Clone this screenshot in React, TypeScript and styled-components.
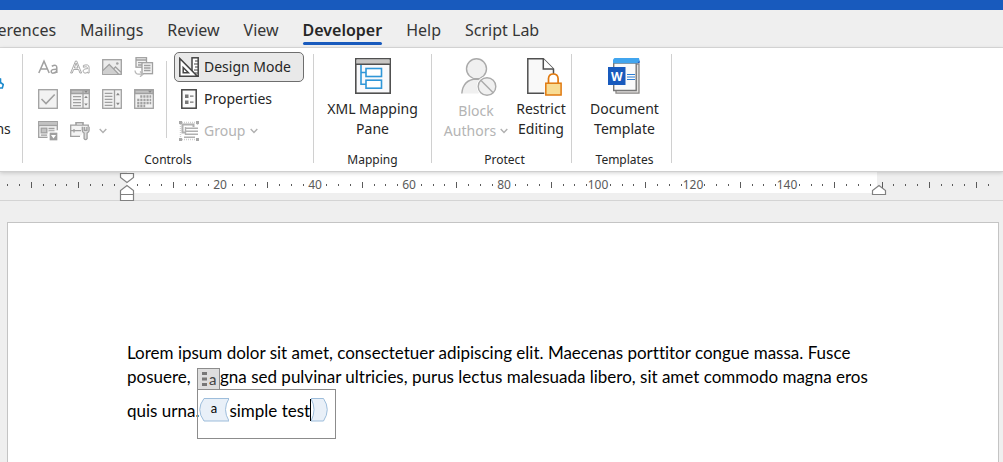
import React from "react";
import styled, { createGlobalStyle } from "styled-components";

const GlobalStyle = createGlobalStyle`
  * { box-sizing: border-box; }
  html, body, #root { height: 100%; }
  body {
    margin: 0;
    background: #efefef;
    font-family: "Noto Sans", "Open Sans", sans-serif;
    color: #262626;
  }
  button, a { font: inherit; color: inherit; }
  svg { display: block; flex: none; }
`;

const Window = styled.div`
  display: flex;
  flex-direction: column;
  min-height: 100%;
  overflow: hidden;
`;

const TitleBar = styled.div`
  height: 10px;
  background: #185abd;
`;

const Tabs = styled.nav`
  display: flex;
  height: 38px;
  margin-left: -39px;
  border-bottom: 1px solid #dcdcdc;
`;

const Tab = styled.a<{ $active?: boolean }>`
  display: flex;
  flex-direction: column;
  align-items: stretch;
  padding: 8px 12px 0;
  font-size: 16px;
  line-height: 24px;
  font-weight: ${(p) => (p.$active ? 600 : 400)};
  white-space: nowrap;
  text-decoration: none;
  color: ${(p) => (p.$active ? "#262626" : "#363636")};
  &::after {
    content: "";
    height: 3px;
    border-radius: 2px;
    background: ${(p) => (p.$active ? "#185abd" : "transparent")};
  }
`;

const Ribbon = styled.div`
  display: flex;
  height: 124px;
  background: #fff;
  border-bottom: 1px solid #cfcfcf;
  box-shadow: 0 1px 4px rgba(0, 0, 0, 0.18);
  position: relative;
`;

const Group = styled.section<{ $width: number; $indent?: boolean }>`
  display: flex;
  flex-direction: column;
  flex: none;
  width: ${(p) => p.$width}px;
  padding-top: 3px;
  padding-left: ${(p) => (p.$indent ? 6 : 0)}px;
`;

const GroupBody = styled.div<{ $align?: string }>`
  display: flex;
  flex: none;
  justify-content: ${(p) => p.$align || "center"};
  height: 96px;
`;

const Caption = styled.div`
  flex: none;
  padding-top: 1px;
  font-size: 12px;
  line-height: 24px;
  text-align: center;
`;

const Divider = styled.div<{ $inner?: boolean }>`
  flex: none;
  width: 1px;
  margin: ${(p) => (p.$inner ? "10px 7px 9px 6px" : "6px 0 8px")};
  background: #d0d0d0;
`;

const ControlGrid = styled.div`
  display: grid;
  grid-template-columns: repeat(4, 32px);
  grid-auto-rows: 32px;
  padding-left: 9px;
`;

const IconButton = styled.button`
  display: flex;
  align-items: center;
  justify-content: center;
  gap: 8px;
  padding: 0;
  border: 0;
  background: none;
  color: #a0a0a0;
`;

const SplitIconButton = styled(IconButton)`
  grid-column: span 2;
  justify-content: flex-start;
  padding-left: 6px;
`;

const Stack = styled.div`
  display: flex;
  flex-direction: column;
  justify-content: space-between;
  width: 130px;
  padding: 1px 0;
`;

const RowButton = styled.button<{ $pressed?: boolean }>`
  display: flex;
  align-items: center;
  gap: 5px;
  height: 30px;
  padding: 0 4px;
  border: 1px solid ${(p) => (p.$pressed ? "#6e6e6e" : "transparent")};
  border-radius: 5px;
  background: ${(p) => (p.$pressed ? "#e9e9e9" : "transparent")};
  font-size: 14px;
  line-height: 20px;
  white-space: nowrap;
  &:disabled { color: #b4b4b4; }
`;

const BigButton = styled.button<{ $width: number; $drop?: number }>`
  display: flex;
  flex-direction: column;
  align-items: center;
  flex: none;
  width: ${(p) => p.$width}px;
  padding: 7px 0 0;
  border: 0;
  background: none;
  font-size: 14px;
  line-height: 20px;
  white-space: nowrap;
  & > svg { margin-bottom: ${(p) => 5 + (p.$drop || 0)}px; }
  &:disabled { color: #b4b4b4; }
`;

const LabelLine = styled.span`
  display: flex;
  align-items: center;
  gap: 4px;
`;

const ClippedGroup = styled(Group)`
  overflow: hidden;
  padding-right: 6px;
  & > div { justify-content: flex-end; }
`;

const RulerBar = styled.div`
  height: 29px;
  border-bottom: 1px solid #d4d4d4;
`;

const RulerSvg = styled.svg`
  overflow: visible;
  font-size: 12px;
  fill: #5a5a5a;
`;

const Canvas = styled.main`
  display: flex;
  flex: 1;
  padding: 21px 4px 0 7px;
`;

const Page = styled.article`
  flex: 1;
  padding: 117px 119px 0;
  border: 1px solid #c4c4c4;
  border-bottom: 0;
  background: #fff;
  color: #000;
  font-family: Lato, sans-serif;
  font-size: 17px;
  font-variant-ligatures: none;
`;

const Line = styled.div<{ $height: number }>`
  display: flex;
  align-items: center;
  height: ${(p) => p.$height}px;
  white-space: pre;
`;

const FieldTag = styled.span`
  position: relative;
  display: flex;
  align-items: center;
  gap: 2px;
  width: 23px;
  height: 22px;
  margin: 6px 0 0 2px;
  padding-left: 4px;
  border: 1px solid #8c8c8c;
  background: #dedede;
  color: #444;
  font-size: 15px;
`;

const FieldOutline = styled.span`
  position: absolute;
  top: 20px;
  left: -1px;
  width: 139px;
  height: 50px;
  border: 1px solid #8c8c8c;
`;

const Caret = styled.span`
  width: 1px;
  height: 22px;
  background: #000;
`;

const Chevron = ({ color = "#b0b0b0" }: { color?: string }) => (
  <svg width="8" height="6" viewBox="0 0 8 6" fill="none" stroke={color} strokeWidth="1.4">
    <path d="M.7 1 4 4.4 7.3 1" />
  </svg>
);

const Icon20 = ({ children, width = 20 }: { children: React.ReactNode; width?: number }) => (
  <svg width={width} height="20" viewBox={`0 0 ${width} 20`} fill="none" stroke="#a0a0a0" strokeWidth="1.3">
    {children}
  </svg>
);

const RichText = () => (
  <Icon20>
    <path d="M.8 16 6 4.2 11.200 16M2.600 12h6.800" strokeWidth="1.500" />
    <path d="M13.800 9.200q5-2.400 5 1.400V16m0-3.800q-5.600-.2-5.600 2t2.300 1.900q3.300-.2 3.300-3" strokeWidth="1.500" />
  </Icon20>
);

const PlainText = () => (
  <Icon20>
    <path d="M.6 16 5.500 4H6.700L11.600 16H9.900L8.600 12.500H3.600L2.300 16ZM4.300 11H8L6.100 6Z" strokeWidth=".9" />
    <path d="M13.400 8.400q5.700-1.700 5.700 2V16h-1.400v-1q-1.700 1.700-3.500 1-2.800-2 .2-3.900l3.300-.5q-.2-2.800-4.300-1.300Z" strokeWidth=".9" />
  </Icon20>
);

const Picture = () => (
  <Icon20>
    <rect x=".7" y="2.700" width="18.600" height="14.600" fill="#ececec" />
    <path d="M1 14.500 7.200 8.500 15.500 17H1Z" fill="#cfcfcf" stroke="none" />
    <path d="M1 13.500 7.200 7.500 16.500 17M11.500 12l2-2 5.500 5.200" />
    <circle cx="15.300" cy="6.500" r="1.300" fill="#a0a0a0" stroke="none" />
  </Icon20>
);

const BuildingBlock = () => (
  <Icon20>
    <rect x="2" y=".7" width="10.500" height="9.500" fill="#f4f4f4" />
    <path d="M2 3h10.500M4 5.700h6M4 8h4" />
    <rect x="8" y="5.700" width="10.500" height="11" fill="#f4f4f4" />
    <path d="M10 8.500h6.500M10 11h6.500M10 13.500h6.500" />
    <path d="M1 13.500q.5 4 4 3.700h3M6 14.500l3 2.700-3 2.600" stroke="#b8b8b8" />
  </Icon20>
);

const CheckControl = () => (
  <Icon20>
    <rect x=".7" y=".7" width="18.600" height="18.600" fill="#f2f2f2" />
    <path d="m3.500 10 4.500 4.500 8.700-9" strokeWidth="1.600" />
  </Icon20>
);

const ComboControl = () => (
  <Icon20>
    <rect x=".7" y=".7" width="18.600" height="18.600" fill="#f2f2f2" />
    <path d="M1 1h18v3.500H1Z" fill="#c2c2c2" />
    <path d="M13 1v18M3 7.700h8M3 10.700h8M3 13.700h8M3 16.700h8" />
    <path d="m14 1.700 2 2.200 2-2.200ZM14.200 9l1.800-2.200L17.800 9ZM14.200 14.500l1.800 2.200 1.800-2.200Z" fill="#888" stroke="none" />
  </Icon20>
);

const ListControl = () => (
  <Icon20>
    <rect x=".7" y=".7" width="18.600" height="18.600" fill="#f2f2f2" />
    <path d="M12.500 1v18M2.700 4.300h7.700M2.700 7.300h7.700M2.700 10.300h7.700M2.700 13.300h7.700M2.700 16.300h7.700" />
    <path d="m14 6.200 1.900-2.400 1.900 2.400ZM14 13.800l1.900 2.400 1.900-2.400Z" fill="#888" stroke="none" />
  </Icon20>
);

const DateControl = () => (
  <Icon20>
    <rect x=".7" y=".7" width="18.600" height="18.600" fill="#f2f2f2" />
    <path d="M1 1h18v3.500H1Z" fill="#c2c2c2" />
    <path d="m14 1.700 2 2.200 2-2.200Z" fill="#888" stroke="none" />
    <path d="M6.200 7.500h11M3.200 10.800h14M3.200 14h14M3.200 17h8" strokeWidth="2.300" strokeDasharray="2.200 .9" />
  </Icon20>
);

const RepeatControl = () => (
  <Icon20>
    <path d="M9.500 16.300H.7V.7h18.600v8.500" fill="#f2f2f2" />
    <path d="M1 1h18v3H1Z" fill="#c2c2c2" stroke="none" />
    <path d="M1 4.500h18" />
    <rect x="3.200" y="7.200" width="5.600" height="4.600" fill="#c2c2c2" />
    <path d="M10.500 7.500h6M10.500 10h6M3 14.200h6" />
    <rect x="11" y="11" width="9" height="9" fill="#a0a0a0" stroke="#fff" />
    <path d="m13 14 2.500 3.500L18 14Z" fill="#fff" stroke="none" />
  </Icon20>
);

const LegacyTools = () => (
  <Icon20 width={21}>
    <path d="M6 4V1.800h7V4" strokeWidth="1.600" />
    <path d="M10 15.300H.7V4.200h17.600v3" fill="#f4f4f4" />
    <path d="M1 9.700h10M4 8v3.500" />
    <path d="M12.300 5.700v3.600q0 2 1.800 2.900v5.500q1.500 2 3 0v-5.500q2-1 2-2.900V5.700M14.300 6v3.300h2.600V6" fill="#ddd" />
  </Icon20>
);

const DesignIcon = () => (
  <svg width="20" height="20" viewBox="0 0 20 20" fill="none" stroke="#444" strokeWidth="1.500">
    <rect x="13" y=".8" width="6.200" height="18.400" fill="#fff" />
    <path d="M16 4h3M15 7h4M16 10h3M15 13h4M16 16h3" strokeWidth="1.200" />
    <path d="M.8 1.500v17.700h17.500Z" fill="#fff" />
    <path d="M4.200 10.500v5.200h5.200Z" />
  </svg>
);

const PropertiesIcon = () => (
  <svg width="20" height="20" viewBox="0 0 20 20" fill="none" stroke="#444" strokeWidth="1.500">
    <rect x="2.800" y=".8" width="14.400" height="18.400" fill="#fafafa" />
    <path d="M6 5.500h3.500v3.500H6ZM6 11.500h3.500v3.500H6Z" fill="#777" stroke="none" />
    <path d="M11 7.200h3.500M11 13.200h3.500" stroke="#777" strokeWidth="1.300" />
  </svg>
);

const GroupIcon = () => (
  <svg width="20" height="20" viewBox="0 0 20 20" fill="none" stroke="#b0b0b0" strokeWidth="1.400">
    <path d="M3 1.500h14M1.500 3v14M18.500 3v2M3 18.500h14" strokeDasharray="1 1" opacity=".6" />
    <path d="M0 0h3v3H0ZM17 0h3v3h-3ZM0 17h3v3H0ZM17 17h3v3h-3Z" fill="#a8a8a8" stroke="none" />
    <path d="M6 11.500H3.500v-8h11V6" strokeWidth="2" />
    <path d="M7 7.200h12M7 10.200h12M7 13.200h12M5 16.200h11" strokeWidth="1.600" />
    <path d="M6.500 6v8" />
  </svg>
);

const GearIcon = () => (
  <svg width="36" height="36" viewBox="0 0 36 36" fill="none" stroke="#1e8bcd" strokeWidth="1.600">
    <path d="M27 19.500 32.500 21v3.500l2.800 2-1 3.500H31M32.500 24.500 30 26" />
  </svg>
);

const XmlIcon = () => (
  <svg width="36" height="36" viewBox="0 0 36 36" fill="none">
    <rect x=".8" y=".8" width="34.400" height="34.400" fill="#f9f9fb" stroke="#505050" strokeWidth="1.600" />
    <path d="M1.500 1.500h33V6h-33Z" fill="#c8c6c4" />
    <path d="M1 6.300h34" stroke="#505050" strokeWidth="1.400" />
    <g stroke="#2f96d8" strokeWidth="1.600">
      <path d="M6 7v19.300h5M6 14.500h5" />
      <rect x="11" y="10.500" width="15.500" height="8" fill="#fff" />
      <rect x="11" y="22.200" width="15.500" height="8" fill="#fff" />
    </g>
  </svg>
);

const BlockAuthorsIcon = () => (
  <svg width="42" height="38" viewBox="-6 0 42 38" fill="#f0f0f0" stroke="#aaa" strokeWidth="1.400">
    <path d="M.8 35.500Q2 21.500 15.500 21q4 0 7 1.500l-5 13Z" stroke="none" />
    <path d="M.8 35.500Q2 21.500 15.500 21q2 0 4 .6" fill="none" />
    <circle cx="15.500" cy="10.800" r="10" />
    <circle cx="26" cy="28.500" r="10.300" fill="#fff" stroke="none" />
    <circle cx="26" cy="28.500" r="8.800" />
    <path d="m19.800 22.300 12.400 12.400" />
  </svg>
);

const RestrictIcon = () => (
  <svg width="42" height="38" viewBox="-6 0 42 38" fill="none" stroke="#505050" strokeWidth="1.500">
    <path d="M18.500 35.200H1.800V.8h15.500L27.500 11v5" fill="#f9f9f9" />
    <path d="M17.300.8V11h10.200" fill="#fff" />
    <path d="M18.500 37V25l4-1 1-8h8v22Z" fill="#fff" stroke="none" />
    <path d="M22.500 25v-4.500q.3-4.500 4.800-4.500t4.800 4.500V25" stroke="#e07a10" strokeWidth="1.700" />
    <rect x="19.800" y="25.200" width="15.300" height="11.800" fill="#f8dc94" stroke="#e07a10" strokeWidth="1.500" />
  </svg>
);

const TemplateIcon = () => (
  <svg width="36" height="36" viewBox="0 0 36 36" fill="none">
    <path d="M9 6h23v29.200H9Z" fill="#e4e2e0" stroke="#8a8886" strokeWidth="1.300" />
    <path d="M6.700 5h22.500v27.500H6.700Z" fill="#fafafa" stroke="#777" strokeWidth="1.400" />
    <path d="M7.500 0h24.500l.7 3.300-2.700 1.900H6V1.500Z" fill="#41a5ee" />
    <path d="M30 5.200 32.700 2.500V5Z" fill="#185abd" />
    <path d="M20 16.500h8M20 19h8M20 21.500h8" stroke="#2b7cd3" strokeWidth="1.100" />
    <rect x="1" y="9" width="17.500" height="18" fill="#185abd" />
    <text x="9.700" y="22.500" textAnchor="middle" fontSize="12" fontWeight="700" fill="#fff">W</text>
  </svg>
);

const TAG_FILL = "#e9f0f8";
const TAG_STROKE = "#9dbddb";

const OpenTag = () => (
  <svg width="30" height="24" viewBox="0 0 30 24" fill={TAG_FILL} stroke={TAG_STROKE}>
    <path d="M5 .5H30Q23 11.500 30 23H5Q-3.500 11.500 5 .5Z" />
    <text x="15" y="15" textAnchor="middle" fontSize="13" fill="#000" stroke="none">a</text>
  </svg>
);

const CloseTag = () => (
  <svg width="17" height="24" viewBox="0 0 17 24" fill={TAG_FILL} stroke={TAG_STROKE}>
    <path d="M0 .5H12.500Q20 11.500 12.500 23H0Q6 11.500 0 .5Z" />
  </svg>
);

const ORIGIN = 126;
const UNIT = 4.725;

const Ruler = () => {
  const ticks: React.ReactNode[] = [];
  for (let i = -10; i <= 73; i++) {
    const value = i * 2.5;
    const x = Math.floor(ORIGIN + value * UNIT);
    if (value === 0) continue;
    if (value > 0 && value < 160 && value % 20 === 0) {
      ticks.push(<text key={i} x={x} y={17} textAnchor="middle">{value}</text>);
    } else {
      const long = value % 10 === 0;
      ticks.push(<rect key={i} x={x} y={long ? 10 : 12} width="1" height={long ? 6 : 2} />);
    }
  }
  return (
    <RulerBar>
      <RulerSvg width="100%" height="28">
        <rect x="127" y="0" width="750" height="21" fill="#fff" />
        {ticks}
        <g fill="#fff" stroke="#808080" strokeWidth="1.200">
          <path d="M120.500 1.500h13v4l-6.500 5-6.500-5Z" />
          <path d="M120.500 28.500v-10l6.500-5 6.500 5v10ZM120.500 22.500h13" />
          <path d="M872.500 22.500v-4l6.500-5 6.500 5v4Z" />
        </g>
      </RulerSvg>
    </RulerBar>
  );
};

const TABS = ["References", "Mailings", "Review", "View", "Developer", "Help", "Script Lab"];

const GALLERY: [string, () => React.JSX.Element][] = [
  ["Rich Text", RichText],
  ["Plain Text", PlainText],
  ["Picture", Picture],
  ["Building Block Gallery", BuildingBlock],
  ["Check Box", CheckControl],
  ["Combo Box", ComboControl],
  ["Drop-Down List", ListControl],
  ["Date Picker", DateControl],
  ["Repeating Section", RepeatControl],
];

export default function App() {
  return (
    <Window>
      <GlobalStyle />
      <TitleBar />
      <Tabs>
        {TABS.map((name) => (
          <Tab key={name} href="#" $active={name === "Developer"}>{name}</Tab>
        ))}
      </Tabs>
      <Ribbon>
        <ClippedGroup $width={22}>
          <GroupBody>
            <BigButton $width={60} $drop={20}>
              <GearIcon />
              <span>Add-ins</span>
            </BigButton>
          </GroupBody>
        </ClippedGroup>
        <Divider />
        <Group $width={290}>
          <GroupBody $align="flex-start">
            <ControlGrid>
              {GALLERY.map(([name, Glyph]) => (
                <IconButton key={name} aria-label={name} disabled><Glyph /></IconButton>
              ))}
              <SplitIconButton aria-label="Legacy Tools" disabled>
                <LegacyTools />
                <Chevron />
              </SplitIconButton>
            </ControlGrid>
            <Divider $inner />
            <Stack>
              <RowButton $pressed aria-pressed="true"><DesignIcon />Design Mode</RowButton>
              <RowButton><PropertiesIcon />Properties</RowButton>
              <RowButton disabled><GroupIcon />Group<Chevron /></RowButton>
            </Stack>
          </GroupBody>
          <Caption>Controls</Caption>
        </Group>
        <Divider />
        <Group $width={117}>
          <GroupBody>
            <BigButton $width={110}>
              <XmlIcon />
              <span>XML Mapping</span>
              <span>Pane</span>
            </BigButton>
          </GroupBody>
          <Caption>Mapping</Caption>
        </Group>
        <Divider />
        <Group $width={139} $indent>
          <GroupBody $align="flex-end">
            <BigButton $width={70} disabled>
              <BlockAuthorsIcon />
              <span>Block</span>
              <LabelLine>Authors <Chevron /></LabelLine>
            </BigButton>
            <BigButton $width={60} $drop={-2}>
              <RestrictIcon />
              <span>Restrict</span>
              <span>Editing</span>
            </BigButton>
          </GroupBody>
          <Caption>Protect</Caption>
        </Group>
        <Divider />
        <Group $width={99} $indent>
          <GroupBody>
            <BigButton $width={90}>
              <TemplateIcon />
              <span>Document</span>
              <span>Template</span>
            </BigButton>
          </GroupBody>
          <Caption>Templates</Caption>
        </Group>
        <Divider />
      </Ribbon>
      <Ruler />
      <Canvas>
        <Page>
          <Line $height={24}>
            Lorem ipsum dolor sit amet, consectetuer adipiscing elit. Maecenas porttitor congue massa. Fusce
          </Line>
          <Line $height={24}>
            <span>posuere, </span>
            <FieldTag>
              <svg width="5" height="14" viewBox="0 0 5 14" fill="#777">
                <path d="M0 0h5v3H0ZM0 5.500h5v3H0ZM0 11h5v3H0Z" />
              </svg>
              a
              <FieldOutline />
            </FieldTag>
            <span>gna sed pulvinar ultricies, purus lectus malesuada libero, sit amet commodo magna eros</span>
          </Line>
          <Line $height={44}>
            <span>quis urna.</span>
            <OpenTag />
            <span>simple test</span>
            <Caret />
            <CloseTag />
          </Line>
        </Page>
      </Canvas>
    </Window>
  );
}
